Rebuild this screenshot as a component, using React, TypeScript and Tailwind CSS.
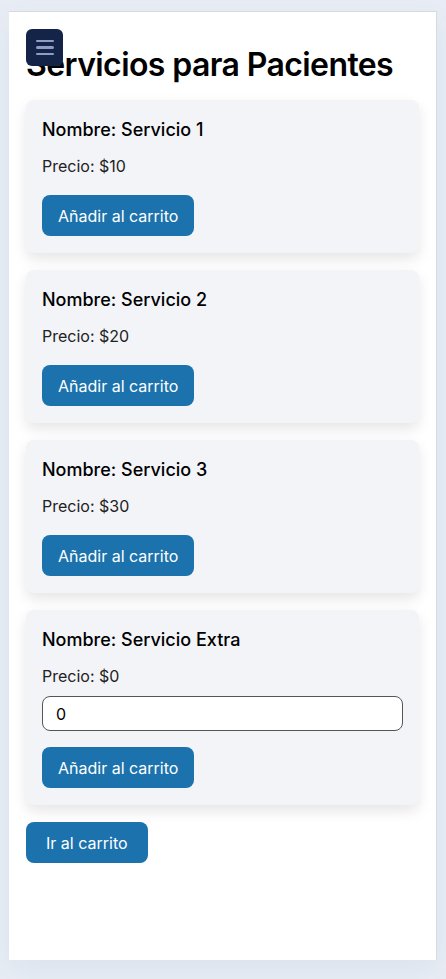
import React from "react";

const services = [
  { name: "Servicio 1", price: 10 },
  { name: "Servicio 2", price: 20 },
  { name: "Servicio 3", price: 30 },
];

function AddButton() {
  return (
    <button className="h-[41px] px-[16px] rounded-[8px] bg-[#1c72ac] text-white text-[16px] leading-none">
      Añadir al carrito
    </button>
  );
}

export default function App() {
  return (
    <div
      className="min-h-[979px] bg-[#e8edf5] pt-[11px] px-[9px] pb-[19px]"
      style={{ fontFamily: "Inter, 'Noto Sans', sans-serif" }}
    >
      <button className="absolute left-[26px] top-[29px] w-[37px] h-[37px] rounded-[6px] bg-[#142449] flex flex-col items-center justify-center gap-[4px] z-10">
        <span className="block w-[18px] h-[2.5px] rounded bg-[#8d9dc6]" />
        <span className="block w-[18px] h-[2.5px] rounded bg-[#8d9dc6]" />
        <span className="block w-[18px] h-[2.5px] rounded bg-[#8d9dc6]" />
      </button>
      <div className="bg-white border-t border-r border-[#d6dbe3] h-[949px] px-[17px] pt-[29px] shadow-[0_10px_30px_rgba(40,60,100,0.06)]">
        <h1 className="text-[32px] leading-[48px] font-semibold text-black tracking-[-0.6px] mb-[11px]">
          Servicios para Pacientes
        </h1>
        <div className="flex flex-col gap-[17px]">
          {services.map((s) => (
            <div
              key={s.name}
              className="bg-[#f3f4f8] rounded-[8px] px-[16px] pt-[16px] pb-[17px] shadow-[0_6px_14px_rgba(0,0,0,0.1)]"
            >
              <h3 className="text-[18px] leading-[28px] font-medium text-black">
                Nombre: {s.name}
              </h3>
              <p className="text-[16px] leading-[24px] text-[#222] mt-[10px] mb-[17px]">
                Precio: ${s.price}
              </p>
              <AddButton />
            </div>
          ))}
          <div className="bg-[#f3f4f8] rounded-[8px] px-[16px] pt-[16px] pb-[17px] shadow-[0_6px_14px_rgba(0,0,0,0.1)]">
            <h3 className="text-[18px] leading-[28px] font-medium text-black">
              Nombre: Servicio Extra
            </h3>
            <p className="text-[16px] leading-[24px] text-[#222] mt-[10px] mb-[8px]">
              Precio: $0
            </p>
            <input
              type="number"
              defaultValue={0}
              className="block w-full h-[35px] border border-[#555] rounded-[8px] bg-white px-[13px] text-[16px] text-black mb-[16px]"
            />
            <AddButton />
          </div>
        </div>
        <button className="mt-[17px] h-[41px] px-[20px] rounded-[8px] bg-[#1c72ac] text-white text-[16px] leading-none">
          Ir al carrito
        </button>
      </div>
    </div>
  );
}
